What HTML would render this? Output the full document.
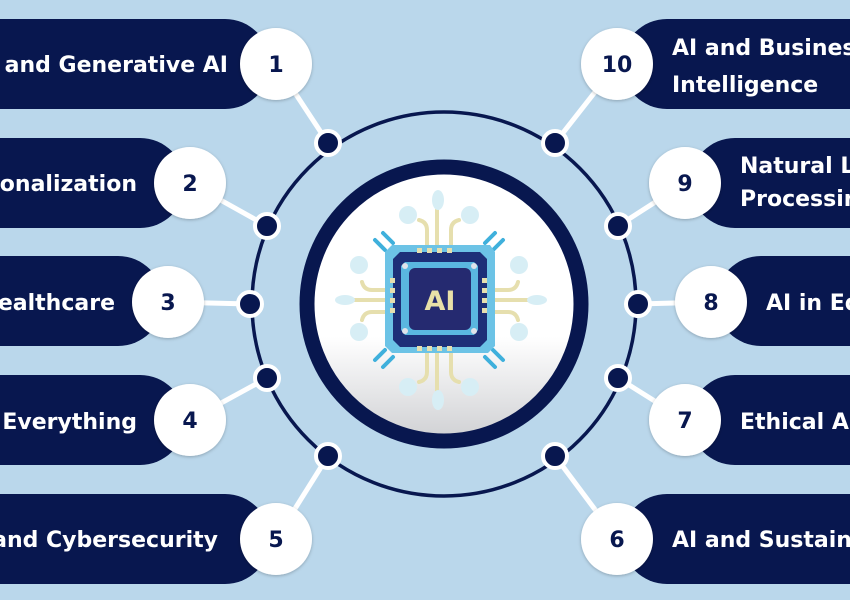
<!DOCTYPE html>
<html><head><meta charset="utf-8"><style>
html,body{margin:0;padding:0;background:#bad7eb;}
svg{display:block}
text{font-family:"DejaVu Sans","Liberation Sans",sans-serif;font-weight:bold;}
</style></head><body>
<svg width="850" height="600" viewBox="0 0 850 600" xmlns="http://www.w3.org/2000/svg">
<defs>
<linearGradient id="wg" x1="0" y1="0" x2="0" y2="1">
<stop offset="0" stop-color="#ffffff"/><stop offset="0.62" stop-color="#ffffff"/><stop offset="1" stop-color="#cfd0d3"/>
</linearGradient>
<filter id="sh" x="-30%" y="-30%" width="160%" height="160%"><feDropShadow dx="0" dy="1" stdDeviation="1.5" flood-color="#000" flood-opacity="0.25"/></filter>
</defs>
<rect width="850" height="600" fill="#bad7eb"/>
<g fill="#08174f">
<rect x="-60" y="19" width="330" height="90" rx="45"/>
<rect x="-60" y="138" width="245" height="90" rx="45"/>
<rect x="-60" y="256" width="223" height="90" rx="45"/>
<rect x="-60" y="375" width="245" height="90" rx="45"/>
<rect x="-60" y="494" width="330" height="90" rx="45"/>
<rect x="622" y="19" width="300" height="90" rx="45"/>
<rect x="690" y="138" width="250" height="90" rx="45"/>
<rect x="716" y="256" width="250" height="90" rx="45"/>
<rect x="690" y="375" width="250" height="90" rx="45"/>
<rect x="622" y="494" width="300" height="90" rx="45"/>
</g>
<g stroke="#ffffff" stroke-width="5" fill="none">
<line x1="276" y1="64" x2="328" y2="143"/>
<line x1="190" y1="183" x2="267" y2="226"/>
<line x1="168" y1="302" x2="250" y2="304"/>
<line x1="190" y1="420" x2="267" y2="378"/>
<line x1="276" y1="539" x2="328" y2="456"/>
<line x1="617" y1="64" x2="555" y2="143"/>
<line x1="685" y1="183" x2="618" y2="226"/>
<line x1="711" y1="302" x2="638" y2="304"/>
<line x1="685" y1="420" x2="618" y2="378"/>
<line x1="617" y1="539" x2="555" y2="456"/>
</g>
<circle cx="444" cy="304" r="192" fill="none" stroke="#08174f" stroke-width="3.5"/>
<circle cx="444" cy="304" r="137" fill="url(#wg)" stroke="#08174f" stroke-width="15"/>
<g fill="#08174f" stroke="#ffffff" stroke-width="4">
<circle cx="328" cy="143" r="12"/><circle cx="267" cy="226" r="12"/><circle cx="250" cy="304" r="12"/><circle cx="267" cy="378" r="12"/><circle cx="328" cy="456" r="12"/>
<circle cx="555" cy="143" r="12"/><circle cx="618" cy="226" r="12"/><circle cx="638" cy="304" r="12"/><circle cx="618" cy="378" r="12"/><circle cx="555" cy="456" r="12"/>
</g>
<g fill="#ffffff" filter="url(#sh)">
<circle cx="276" cy="64" r="36"/><circle cx="190" cy="183" r="36"/><circle cx="168" cy="302" r="36"/><circle cx="190" cy="420" r="36"/><circle cx="276" cy="539" r="36"/>
<circle cx="617" cy="64" r="36"/><circle cx="685" cy="183" r="36"/><circle cx="711" cy="302" r="36"/><circle cx="685" cy="420" r="36"/><circle cx="617" cy="539" r="36"/>
</g>
<g fill="#08174f" font-size="22" text-anchor="middle">
<text x="276" y="72">1</text><text x="190" y="191">2</text><text x="168" y="310">3</text><text x="190" y="428">4</text><text x="276" y="547">5</text>
<text x="617" y="72">10</text><text x="685" y="191">9</text><text x="711" y="310">8</text><text x="685" y="428">7</text><text x="617" y="547">6</text>
</g>
<g fill="#ffffff" font-size="22">
<text x="228" y="72" text-anchor="end">and Generative AI</text>
<text x="137" y="191" text-anchor="end">onalization</text>
<text x="115" y="310" text-anchor="end">ealthcare</text>
<text x="137" y="429" text-anchor="end">Everything</text>
<text x="218" y="547" text-anchor="end">and Cybersecurity</text>
<text x="672" y="55">AI and Business</text>
<text x="672" y="92">Intelligence</text>
<text x="740" y="173">Natural Language</text>
<text x="740" y="206">Processing</text>
<text x="766" y="310">AI in Education</text>
<text x="740" y="429">Ethical AI</text>
<text x="672" y="547">AI and Sustainability</text>
</g>
<g>
<g stroke="#e6dfae" stroke-width="4" fill="none" stroke-linecap="round">
<path d="M437 248 V210"/><path d="M427 248 V230 q0-8-8-10"/><path d="M451 248 V230 q0-8 8-10"/>
<path d="M437 353 V392"/><path d="M427 353 V372 q0 8-8 10"/><path d="M451 353 V372 q0 8 8 10"/>
<path d="M385 300 H352"/><path d="M385 290 H372 q-8 0-10-8"/><path d="M385 312 H372 q-8 0-10 8"/>
<path d="M495 300 H528"/><path d="M495 290 H508 q8 0 10-8"/><path d="M495 312 H508 q8 0 10 8"/>
</g>
<g fill="#d7eef5">
<ellipse cx="438" cy="200" rx="6" ry="10"/><ellipse cx="438" cy="400" rx="6" ry="10"/>
<ellipse cx="345" cy="300" rx="10" ry="5"/><ellipse cx="537" cy="300" rx="10" ry="5"/>
<circle cx="408" cy="215" r="9"/><circle cx="470" cy="215" r="9"/><circle cx="408" cy="387" r="9"/><circle cx="470" cy="387" r="9"/>
<circle cx="359" cy="265" r="9"/><circle cx="519" cy="265" r="9"/><circle cx="359" cy="332" r="9"/><circle cx="519" cy="332" r="9"/>
</g>
<g stroke="#3fb0dc" stroke-width="4" stroke-linecap="round">
<path d="M375 240 l10 10 M383 233 l10 10"/><path d="M503 240 l-10 10 M495 233 l-10 10"/>
<path d="M375 360 l10 -10 M383 367 l10 -10"/><path d="M503 360 l-10 -10 M495 367 l-10 -10"/>
</g>
<path d="M392 245 H490 L495 252 V346 L488 353 H392 L385 346 V252 Z" fill="#6cc3e6"/>
<path d="M400 252 H480 L487 259 V340 L480 347 H400 L393 340 V259 Z" fill="#1d2f78"/>
<g fill="#e6dfae">
<rect x="417" y="248" width="5" height="5"/><rect x="427" y="248" width="5" height="5"/><rect x="437" y="248" width="5" height="5"/><rect x="447" y="248" width="5" height="5"/>
<rect x="417" y="346" width="5" height="5"/><rect x="427" y="346" width="5" height="5"/><rect x="437" y="346" width="5" height="5"/><rect x="447" y="346" width="5" height="5"/>
<rect x="390" y="278" width="5" height="5"/><rect x="390" y="288" width="5" height="5"/><rect x="390" y="298" width="5" height="5"/><rect x="390" y="308" width="5" height="5"/>
<rect x="482" y="278" width="5" height="5"/><rect x="482" y="288" width="5" height="5"/><rect x="482" y="298" width="5" height="5"/><rect x="482" y="308" width="5" height="5"/>
</g>
<path d="M405 262 H474 L478 266 V330 L474 335 H405 L401 330 V266 Z" fill="#5ab7e0"/>
<rect x="409" y="268" width="62" height="62" rx="6" fill="#252a70"/>
<g fill="#dfe3ea"><circle cx="405" cy="266" r="3"/><circle cx="474" cy="266" r="3"/><circle cx="405" cy="331" r="3"/><circle cx="474" cy="331" r="3"/></g>
<text x="440" y="310" text-anchor="middle" font-size="27" fill="#e8e0a8">AI</text>
</g>
</svg>
</body></html>
